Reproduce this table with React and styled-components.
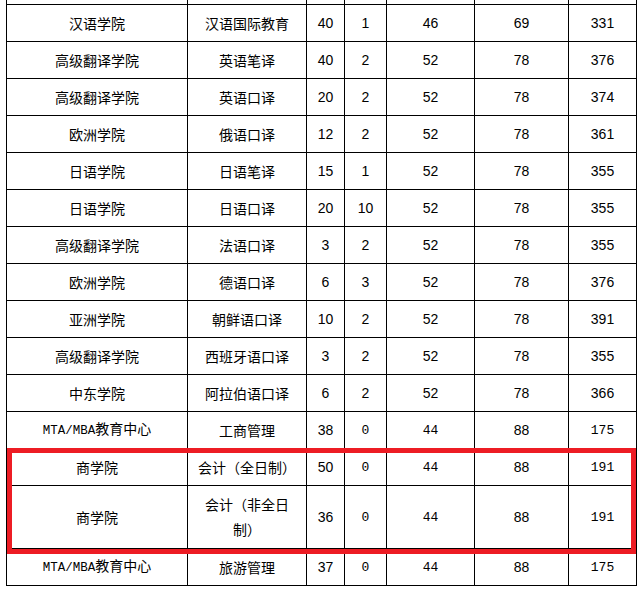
import React from 'react'
import styled, { createGlobalStyle } from 'styled-components'

const GlobalStyle = createGlobalStyle`
  html, body {
    margin: 0;
    padding: 0;
    background: #fff;
    overflow: hidden;
  }
`

const Page = styled.div`
  width: 642px;
  height: 594px;
  overflow: hidden;
  padding-left: 6px;
  box-sizing: border-box;
`

const Frame = styled.div`
  position: relative;
  width: 630px;
  margin-top: -33px;
`

const Table = styled.table`
  border-collapse: collapse;
  table-layout: fixed;
  width: 630px;
  color: #000;
  font-family: 'Noto Sans CJK SC', sans-serif;
  font-size: 14px;
`

const Row = styled.tr`
  height: ${(p) => p.$h || 37}px;
`

const Cell = styled.td`
  border: 1px solid #000;
  padding: 0 ${(p) => (p.$num ? 2 : 10)}px;
  text-align: center;
  vertical-align: middle;
  line-height: 25px;
  font-family: ${(p) =>
    p.$num
      ? p.$mono
        ? "'Liberation Mono', monospace"
        : "'Liberation Sans Narrow', 'Liberation Sans', sans-serif"
      : "'Noto Sans CJK SC', sans-serif"};
  font-size: ${(p) => (p.$mono ? 13 : 14)}px;
`

const Latin = styled.span`
  font-family: 'Liberation Mono', monospace;
  font-size: 12.5px;
`

// highlight drawn over the two 商学院 rows
const Highlight = styled.div`
  position: absolute;
  left: 1px;
  top: 481px;
  width: 629px;
  height: 106px;
  border: 5px solid #ed1c24;
  box-sizing: border-box;
  pointer-events: none;
`

const widths = [181, 119, 38, 42, 88, 94, 68]

const rows = [
  ['汉语学院', '汉语国际教育', '40', '1', '46', '69', '331'],
  ['高级翻译学院', '英语笔译', '40', '2', '52', '78', '376'],
  ['高级翻译学院', '英语口译', '20', '2', '52', '78', '374'],
  ['欧洲学院', '俄语口译', '12', '2', '52', '78', '361'],
  ['日语学院', '日语笔译', '15', '1', '52', '78', '355'],
  ['日语学院', '日语口译', '20', '10', '52', '78', '355'],
  ['高级翻译学院', '法语口译', '3', '2', '52', '78', '355'],
  ['欧洲学院', '德语口译', '6', '3', '52', '78', '376'],
  ['亚洲学院', '朝鲜语口译', '10', '2', '52', '78', '391'],
  ['高级翻译学院', '西班牙语口译', '3', '2', '52', '78', '355'],
  ['中东学院', '阿拉伯语口译', '6', '2', '52', '78', '366'],
  ['MTA/MBA教育中心', '工商管理', '38', '0', '44', '88', '175', true],
  ['商学院', '会计（全日制）', '50', '0', '44', '88', '191', true],
  ['商学院', '会计（非全日制）', '36', '0', '44', '88', '191', true, 63],
  ['MTA/MBA教育中心', '旅游管理', '37', '0', '44', '88', '175', true],
]

const monoCols = [3, 4, 6]

const renderName = (text) => {
  const m = text.match(/^([A-Za-z/]+)(.*)$/)
  if (!m) return text
  return (
    <>
      <Latin>{m[1]}</Latin>
      {m[2]}
    </>
  )
}

export default function App() {
  return (
    <Page>
      <GlobalStyle />
      <Frame>
        <Table>
          <colgroup>
            {widths.map((w, i) => (
              <col key={i} style={{ width: w }} />
            ))}
          </colgroup>
          <tbody>
            <Row>
              {widths.map((_, i) => (
                <Cell key={i} $num={i > 1} />
              ))}
            </Row>
            {rows.map((r, ri) => {
              const mono = r[7] === true
              return (
                <Row key={ri} $h={r[8]}>
                  <Cell>{renderName(r[0])}</Cell>
                  <Cell>{r[1]}</Cell>
                  {r.slice(2, 7).map((v, ci) => (
                    <Cell
                      key={ci}
                      $num
                      $mono={mono && monoCols.includes(ci + 2)}
                    >
                      {v}
                    </Cell>
                  ))}
                </Row>
              )
            })}
          </tbody>
        </Table>
        <Highlight />
      </Frame>
    </Page>
  )
}
